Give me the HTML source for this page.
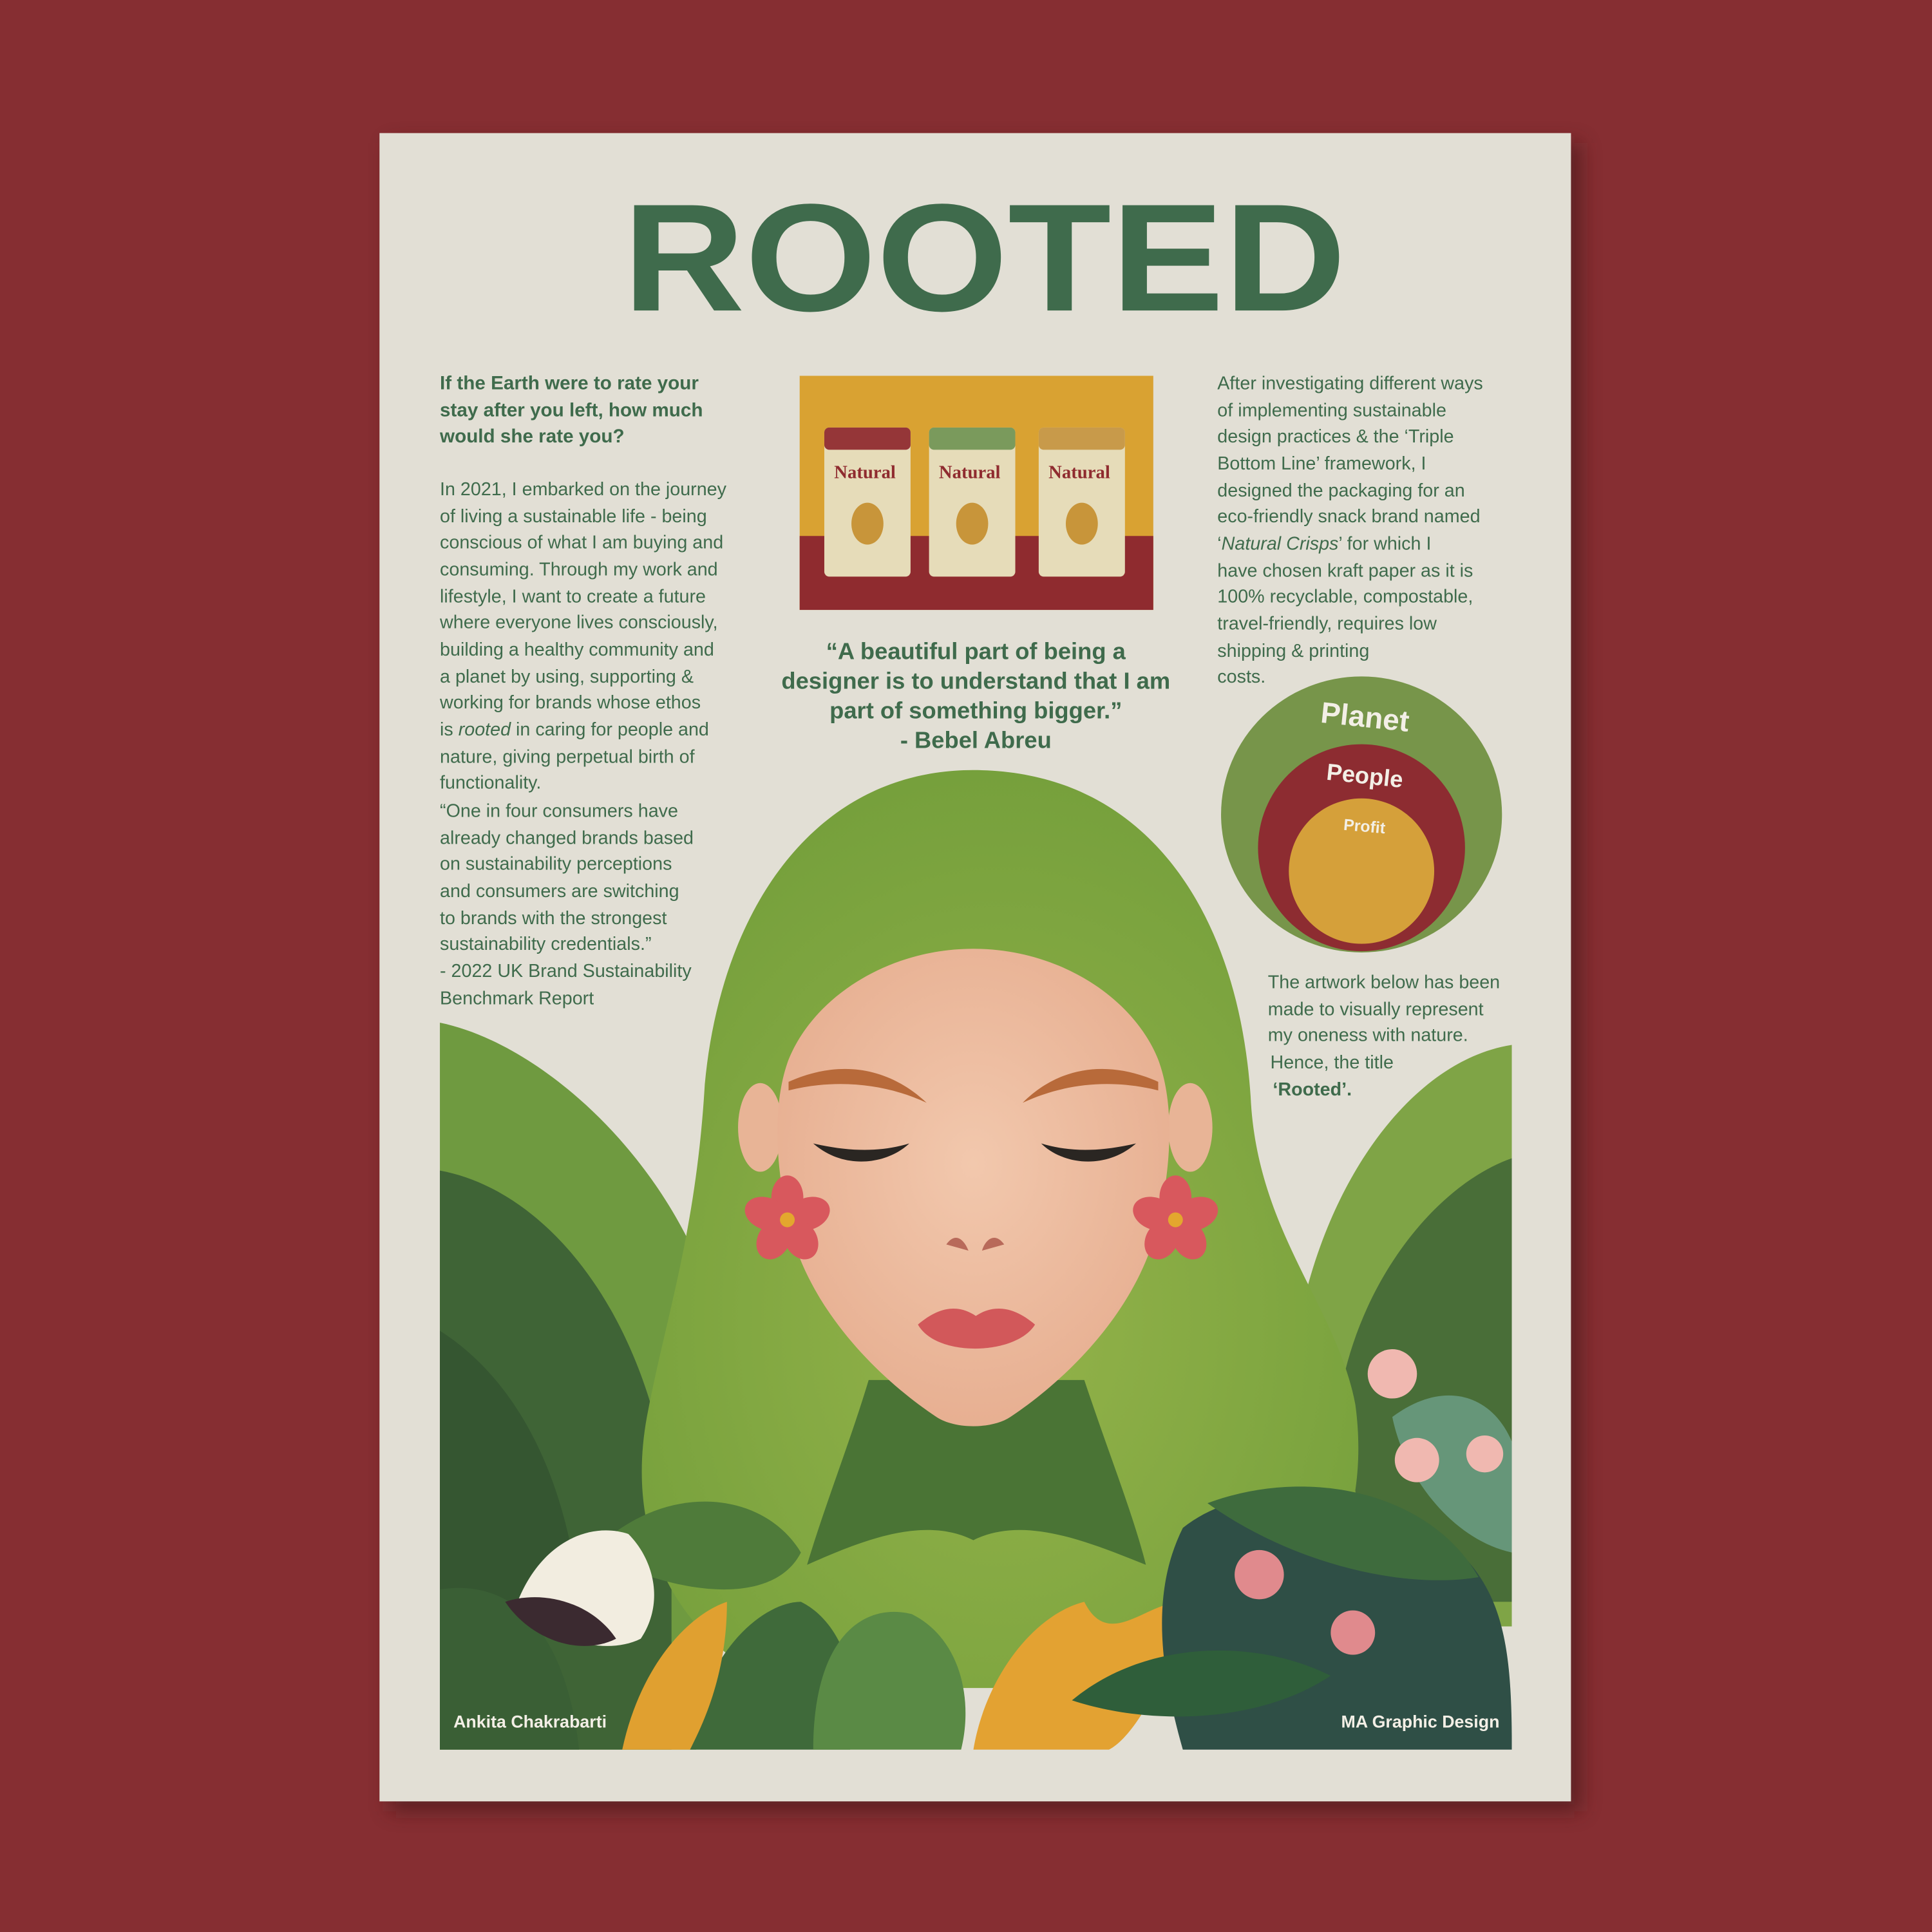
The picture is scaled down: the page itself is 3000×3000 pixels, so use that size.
<!DOCTYPE html>
<html><head><meta charset="utf-8"><style>
html,body{margin:0;padding:0;background:#862e32;}
svg{display:block}
</style></head><body>
<svg width="3000" height="3000" viewBox="0 0 1568 1568" xmlns="http://www.w3.org/2000/svg">
<defs>
<filter id="sh" x="-5%" y="-5%" width="115%" height="115%"><feGaussianBlur stdDeviation="8"/></filter>
<radialGradient id="hairg" cx="50%" cy="60%" r="60%"><stop offset="0" stop-color="#94b34a"/><stop offset="1" stop-color="#76a03c"/></radialGradient>
<radialGradient id="skin" cx="50%" cy="45%" r="60%"><stop offset="0" stop-color="#f2c8ad"/><stop offset="1" stop-color="#e6ad8f"/></radialGradient>
<clipPath id="illo"><path d="M357,600 H1227 V1420 H357 Z"/></clipPath>
<g id="fl"><g fill="#d8585d"><ellipse cx="0" cy="-18" rx="13" ry="18"/><ellipse cx="17" cy="-5" rx="18" ry="13" transform="rotate(-20 17 -5)"/><ellipse cx="11" cy="16" rx="13" ry="17" transform="rotate(-30 11 16)"/><ellipse cx="-11" cy="16" rx="13" ry="17" transform="rotate(30 -11 16)"/><ellipse cx="-17" cy="-5" rx="18" ry="13" transform="rotate(20 -17 -5)"/></g><circle r="6" fill="#e3a72e"/></g>
</defs>
<rect width="1568" height="1568" fill="#862e32"/>
<rect x="316" y="116" width="967" height="1354" fill="#3a1215" opacity="0.55" filter="url(#sh)"/>
<rect x="308" y="108" width="967" height="1354" fill="#e2dfd5"/>
<text x="799" y="252" text-anchor="middle" font-family="Liberation Sans,sans-serif" font-weight="bold" font-size="138" fill="#3f6b4c" textLength="587" lengthAdjust="spacingAndGlyphs" transform="translate(0,25.2) scale(1,0.9)">ROOTED</text>
<g font-family="Liberation Sans,sans-serif" fill="#3f6b4c" font-size="15">
<g font-weight="bold" font-size="15.5">
<text x="357" y="316">If the Earth were to rate your</text>
<text x="357" y="338">stay after you left, how much</text>
<text x="357" y="359">would she rate you?</text>
</g>
<text x="357" y="402">In 2021, I embarked on the journey</text>
<text x="357" y="424">of living a sustainable life - being</text>
<text x="357" y="445">conscious of what I am buying and</text>
<text x="357" y="467">consuming. Through my work and</text>
<text x="357" y="489">lifestyle, I want to create a future</text>
<text x="357" y="510">where everyone lives consciously,</text>
<text x="357" y="532">building a healthy community and</text>
<text x="357" y="554">a planet by using, supporting &amp;</text>
<text x="357" y="575">working for brands whose ethos</text>
<text x="357" y="597">is <tspan font-style="italic">rooted</tspan> in caring for people and</text>
<text x="357" y="619">nature, giving perpetual birth of</text>
<text x="357" y="640">functionality.</text>
<text x="357" y="663">“One in four consumers have</text>
<text x="357" y="685">already changed brands based</text>
<text x="357" y="706">on sustainability perceptions</text>
<text x="357" y="728">and consumers are switching</text>
<text x="357" y="750">to brands with the strongest</text>
<text x="357" y="771">sustainability credentials.”</text>
<text x="357" y="793">- 2022 UK Brand Sustainability</text>
<text x="357" y="815">Benchmark Report</text>

<text x="988" y="316">After investigating different ways</text>
<text x="988" y="338">of implementing sustainable</text>
<text x="988" y="359">design practices &amp; the ‘Triple</text>
<text x="988" y="381">Bottom Line’ framework, I</text>
<text x="988" y="403">designed the packaging for an</text>
<text x="988" y="424">eco-friendly snack brand named</text>
<text x="988" y="446">‘<tspan font-style="italic">Natural Crisps</tspan>’ for which I</text>
<text x="988" y="468">have chosen kraft paper as it is</text>
<text x="988" y="489">100% recyclable, compostable,</text>
<text x="988" y="511">travel-friendly, requires low</text>
<text x="988" y="533">shipping &amp; printing</text>
<text x="988" y="554">costs.</text>

<text x="1029" y="802">The artwork below has been</text>
<text x="1029" y="824">made to visually represent</text>
<text x="1029" y="845">my oneness with nature.</text>
<text x="1031" y="867">Hence, the title</text>
<text x="1033" y="889" font-weight="bold">‘Rooted’.</text>

<g font-weight="bold" font-size="19" text-anchor="middle">
<text x="792" y="535">“A beautiful part of being a</text>
<text x="792" y="559">designer is to understand that I am</text>
<text x="792" y="583">part of something bigger.”</text>
<text x="792" y="607">- Bebel Abreu</text>
</g>
</g>
<rect x="649" y="305" width="287" height="190" fill="#d9a232"/>
<rect x="649" y="435" width="287" height="60" fill="#8f2b2f"/>
<g>
<rect x="669" y="347" width="70" height="121" rx="4" fill="#e6dcb9"/><rect x="669" y="347" width="70" height="18" rx="4" fill="#953638"/>
<rect x="754" y="347" width="70" height="121" rx="4" fill="#e6dcb9"/><rect x="754" y="347" width="70" height="18" rx="4" fill="#7a9a5c"/>
<rect x="843" y="347" width="70" height="121" rx="4" fill="#e6dcb9"/><rect x="843" y="347" width="70" height="18" rx="4" fill="#c89a4a"/>
<g font-family="Liberation Serif,serif" font-size="15" fill="#8f2b2f" font-weight="bold"><text x="677" y="388">Natural</text><text x="762" y="388">Natural</text><text x="851" y="388">Natural</text></g>
<ellipse cx="704" cy="425" rx="13" ry="17" fill="#c8953a"/><ellipse cx="789" cy="425" rx="13" ry="17" fill="#c8953a"/><ellipse cx="878" cy="425" rx="13" ry="17" fill="#c8953a"/>
</g>
<ellipse cx="1105" cy="661" rx="114" ry="112" fill="#77954a"/>
<circle cx="1105" cy="688" r="84" fill="#8d2c31"/>
<circle cx="1105" cy="707" r="59" fill="#d5a03a"/>
<g font-family="Liberation Sans,sans-serif" font-weight="bold" fill="#f3efe6" text-anchor="middle">
<text x="1107" y="590" font-size="24" transform="rotate(6 1107 590)">Planet</text>
<text x="1107" y="636" font-size="19" transform="rotate(6 1107 636)">People</text>
<text x="1107" y="675" font-size="13" transform="rotate(5 1107 675)">Profit</text>
</g>
<g clip-path="url(#illo)">
<path d="M357,830 C430,845 520,920 565,1020 L565,1420 L357,1420 Z" fill="#6f9a40"/>
<path d="M357,950 C440,965 525,1060 545,1220 L545,1420 L357,1420 Z" fill="#3f6436"/>
<path d="M357,1080 C420,1120 460,1200 470,1300 L357,1300 Z" fill="#2f4c2e" opacity="0.6"/>
<path d="M1227,848 C1150,860 1080,950 1055,1070 L1070,1320 L1227,1320 Z" fill="#7fa446"/>
<path d="M1227,940 C1170,960 1110,1030 1090,1120 L1110,1300 L1227,1300 Z" fill="#496e38"/>
<path d="M790,625 C660,625 585,740 572,880 C565,1000 540,1070 525,1150 C505,1260 560,1340 640,1370 L960,1370 C1060,1340 1115,1250 1100,1140 C1085,1060 1020,1000 1015,890 C1005,740 930,625 790,625 Z" fill="url(#hairg)"/>
<path d="M705,1120 L880,1120 C900,1180 920,1230 930,1270 C880,1250 830,1230 790,1250 C750,1230 700,1250 655,1270 C670,1220 690,1170 705,1120 Z" fill="#4a7435"/>
<ellipse cx="617" cy="915" rx="18" ry="36" fill="#e8b496"/>
<ellipse cx="966" cy="915" rx="18" ry="36" fill="#e8b496"/>
<path d="M790,770 C720,770 660,810 640,860 C625,900 630,960 645,1010 C665,1070 715,1120 760,1150 C775,1160 805,1160 820,1150 C865,1120 915,1070 935,1010 C950,960 955,900 940,860 C920,810 860,770 790,770 Z" fill="url(#skin)"/>
<path d="M640,878 C680,860 720,865 752,895 C720,880 680,875 640,885 Z" fill="#b86a3a"/>
<path d="M940,878 C900,860 860,865 830,895 C862,880 900,875 940,885 Z" fill="#b86a3a"/>
<path d="M660,928 C690,935 715,935 738,928 C720,945 685,950 660,928 Z" fill="#2a2622"/>
<path d="M922,928 C892,935 868,935 845,928 C862,945 897,950 922,928 Z" fill="#2a2622"/>
<path d="M768,1010 C775,1000 782,1005 786,1015 Z M815,1010 C808,1000 800,1005 797,1015 Z" fill="#b86a5a"/>
<path d="M745,1075 C765,1058 780,1060 792,1068 C804,1060 820,1058 840,1075 C825,1100 760,1102 745,1075 Z" fill="#d2585a"/>
<use href="#fl" x="639" y="990"/>
<use href="#fl" x="954" y="990"/>
<path d="M480,1260 C540,1200 620,1210 650,1260 C630,1300 560,1300 480,1260 Z" fill="#4f7b3a"/>
<path d="M357,1290 C420,1280 460,1330 470,1420 L357,1420 Z" fill="#3a5f35"/>
<path d="M560,1420 C570,1340 620,1300 650,1300 C690,1320 700,1380 690,1420 Z" fill="#3f6a3a"/>
<path d="M660,1420 C660,1330 700,1300 740,1310 C780,1330 790,1380 780,1420 Z" fill="#5a8a45"/>
<path d="M505,1420 C520,1350 560,1310 590,1300 C590,1360 570,1400 560,1420 Z" fill="#e0a030"/>
<path d="M790,1420 C800,1360 840,1310 880,1300 C900,1340 930,1300 960,1300 C950,1360 920,1410 900,1420 Z" fill="#e3a232"/>
<path d="M960,1240 C1010,1200 1100,1205 1160,1240 C1220,1280 1227,1330 1227,1420 L960,1420 C940,1350 935,1290 960,1240 Z" fill="#2f4f46"/>
<path d="M980,1220 C1060,1190 1160,1210 1200,1280 C1140,1290 1050,1270 980,1220 Z" fill="#3e6b3d"/>
<path d="M870,1380 C930,1330 1020,1330 1080,1360 C1020,1400 930,1400 870,1380 Z" fill="#2f5e3a"/>
<path d="M1130,1150 C1170,1120 1210,1130 1227,1170 L1227,1260 C1180,1250 1140,1200 1130,1150 Z" fill="#6ea08a" opacity="0.8"/>
<circle cx="1022" cy="1278" r="20" fill="#e08a8d"/>
<circle cx="1098" cy="1325" r="18" fill="#e08a8d"/>
<g fill="#f0b8b0"><circle cx="1130" cy="1115" r="20"/><circle cx="1150" cy="1185" r="18"/><circle cx="1205" cy="1180" r="15"/></g>
<path d="M420,1300 C440,1250 480,1235 510,1245 C530,1265 540,1300 520,1330 C490,1345 440,1330 420,1300 Z" fill="#f2ede0"/>
<path d="M410,1300 C440,1290 480,1300 500,1330 C470,1345 430,1330 410,1300 Z" fill="#3b2a30"/>
</g>
<g font-family="Liberation Sans,sans-serif" font-weight="bold" font-size="14" fill="#f3efe6">
<text x="368" y="1402">Ankita Chakrabarti</text>
<text x="1217" y="1402" text-anchor="end">MA Graphic Design</text>
</g>
</svg>
</body></html>
